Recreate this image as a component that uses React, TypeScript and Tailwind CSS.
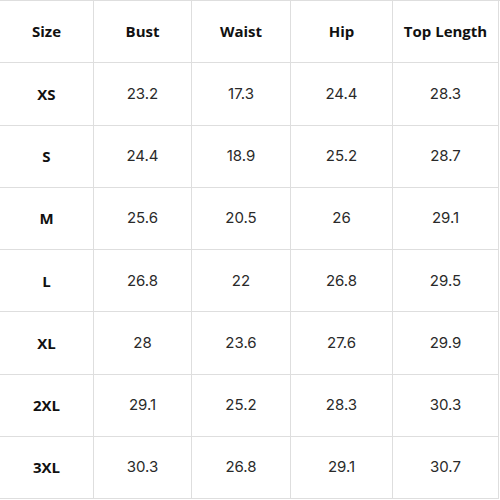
const headers = ['Size', 'Bust', 'Waist', 'Hip', 'Top Length'];

const rows = [
  ['XS', '23.2', '17.3', '24.4', '28.3'],
  ['S', '24.4', '18.9', '25.2', '28.7'],
  ['M', '25.6', '20.5', '26', '29.1'],
  ['L', '26.8', '22', '26.8', '29.5'],
  ['XL', '28', '23.6', '27.6', '29.9'],
  ['2XL', '29.1', '25.2', '28.3', '30.3'],
  ['3XL', '30.3', '26.8', '29.1', '30.7'],
];

export default function App() {
  return (
    <div className="w-[500px] h-[500px] bg-white" style={{ fontFamily: '"Open Sans", "Liberation Sans", sans-serif' }}>
      <div className="grid grid-cols-[94px_98px_99px_102px_106px] grid-rows-[repeat(8,62.3px)] border-t border-[#dedede]">
        {headers.map((h) => (
          <div
            key={h}
            className="flex items-center justify-center border-r border-b border-[#dedede] text-[15px] font-bold text-[#111]"
          >
            {h}
          </div>
        ))}
        {rows.map((r) =>
          r.map((cell, i) => (
            <div
              key={r[0] + i}
              className={
                i === 0
                  ? 'flex items-center justify-center border-r border-b border-[#dedede] text-[15px] font-bold text-[#111]'
                  : 'flex items-center justify-center border-r border-b border-[#dedede] text-[15px] text-[#2a2a2a] font-["Inter",sans-serif]'
              }
            >
              {cell}
            </div>
          ))
        )}
      </div>
    </div>
  );
}
